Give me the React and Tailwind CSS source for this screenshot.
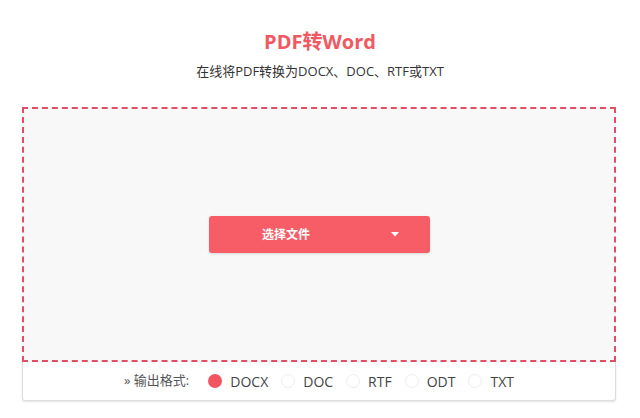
import React, { useState } from 'react';

const formats = ['DOCX', 'DOC', 'RTF', 'ODT', 'TXT'];

const App = () => {
  const [format, setFormat] = useState('DOCX');

  return (
    <div
      className="w-[640px] h-[418px] bg-white overflow-hidden"
      style={{ fontFamily: '"Open Sans", "Noto Sans CJK SC", sans-serif' }}
    >
      {/* Header */}
      <div className="pt-[28px] text-center">
        <h1 className="text-[20px] leading-[28px] font-bold text-[#ef5a62]">PDF转Word</h1>
        <p className="mt-[5px] text-[13px] leading-[20px] text-[#333]">在线将PDF转换为DOCX、DOC、RTF或TXT</p>
      </div>

      {/* Drop zone */}
      <div className="ml-[22px] w-[594px] mt-[26px]">
        <div className="h-[255px] border-2 border-dashed border-[#e05065] bg-[#f8f8f8] flex items-center justify-center">
          <button className="w-[221px] h-[37px] rounded-[3px] bg-[#f65d66] text-white text-[12px] font-bold flex items-center shadow-sm">
            <span className="flex-1 text-center pl-[4px]">选择文件</span>
            <span className="w-[70px] flex justify-center">
              <svg width="8" height="5" viewBox="0 0 8 5">
                <path d="M0 0h8L4 4.5z" fill="#fff" />
              </svg>
            </span>
          </button>
        </div>

        {/* Output format */}
        <div className="h-[39px] border border-t-0 border-[#ddd] rounded-b-[3px] shadow-[0_1px_2px_rgba(0,0,0,0.12)] flex items-center justify-center text-[14px] text-[#444]">
          <span className="text-[13px] text-[#555] mr-[19px]">» 输出格式:</span>
          {formats.map((f, i) => (
            <label
              key={f}
              className={`flex items-center cursor-pointer ${i < formats.length - 1 ? 'mr-[13px]' : ''}`}
              onClick={() => setFormat(f)}
            >
              <span
                className={`w-[14px] h-[14px] rounded-full mr-[8px] ${
                  format === f ? 'bg-[#f25562]' : 'border border-[#eeeeee] bg-white'
                }`}
              />
              <span>{f}</span>
            </label>
          ))}
        </div>
      </div>
    </div>
  );
};

export default App;
